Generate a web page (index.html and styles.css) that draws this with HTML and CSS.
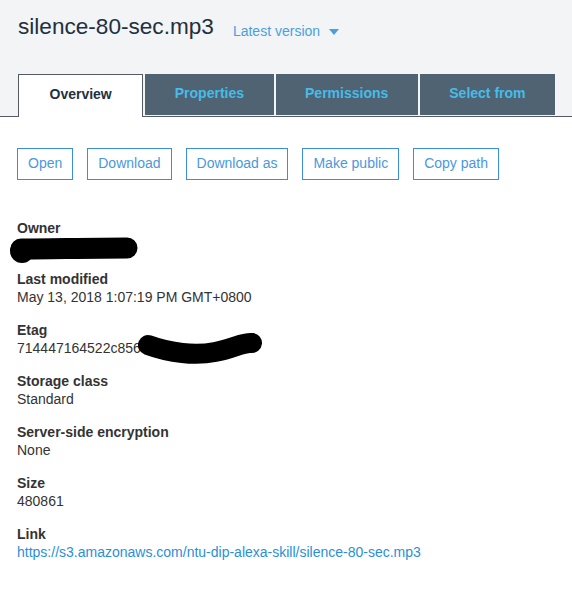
FILE: index.html
```html
<!DOCTYPE html>
<html lang="en">
<head>
<meta charset="utf-8">
<title>silence-80-sec.mp3</title>
<link rel="stylesheet" href="styles.css">
</head>
<body>
<header class="header">
  <div class="title-row">
    <h1 class="title">silence-80-sec.mp3</h1>
    <span class="version">Latest version <span class="caret"></span></span>
  </div>
  <nav class="tabs">
    <span class="tab active">Overview</span>
    <span class="tab">Properties</span>
    <span class="tab">Permissions</span>
    <span class="tab">Select from</span>
  </nav>
</header>
<main class="content">
  <div class="actions">
    <button class="btn">Open</button>
    <button class="btn">Download</button>
    <button class="btn">Download as</button>
    <button class="btn">Make public</button>
    <button class="btn">Copy path</button>
  </div>
  <dl class="fields">
    <div class="field">
      <dt>Owner</dt>
      <dd class="redacted">&nbsp;<svg class="blob blob-owner" width="135" height="30" viewBox="0 0 135 30"><circle cx="13" cy="15" r="12" fill="#000"/><path d="M12 13 C40 13 80 12 118 12" stroke="#000" stroke-width="21" stroke-linecap="round" fill="none"/></svg></dd>
    </div>
    <div class="field">
      <dt>Last modified</dt>
      <dd>May 13, 2018 1:07:19 PM GMT+0800</dd>
    </div>
    <div class="field">
      <dt>Etag</dt>
      <dd class="redacted">714447164522c856<svg class="blob blob-etag" width="150" height="35" viewBox="0 0 150 35"><path d="M11 14 C33 22 58 25 78 21 S106 11 115 12" stroke="#000" stroke-width="20" stroke-linecap="round" fill="none"/></svg></dd>
    </div>
    <div class="field">
      <dt>Storage class</dt>
      <dd>Standard</dd>
    </div>
    <div class="field">
      <dt>Server-side encryption</dt>
      <dd>None</dd>
    </div>
    <div class="field">
      <dt>Size</dt>
      <dd>480861</dd>
    </div>
    <div class="field">
      <dt>Link</dt>
      <dd><a class="link" href="#">https://s3.amazonaws.com/ntu-dip-alexa-skill/silence-80-sec.mp3</a></dd>
    </div>
  </dl>
</main>
</body>
</html>
```
FILE: styles.css
```css
* { box-sizing: border-box; }
html, body { margin: 0; padding: 0; background: #fff; }
body {
  font-family: "Liberation Sans", Arial, sans-serif;
  font-size: 14px;
  color: #333;
}
.header {
  background: #f2f4f5;
  border-bottom: 1px solid #545b64;
  padding: 14px 0 0 18px;
}
.title-row {
  display: flex;
  align-items: flex-end;
  gap: 19px;
}
.title {
  margin: 0;
  font-size: 22.6px;
  font-weight: normal;
  line-height: 25px;
  color: #232f3e;
}
.version {
  color: #4a9fe0;
  font-size: 14px;
  line-height: 16px;
  display: flex;
  align-items: center;
  gap: 9px;
}
.caret {
  width: 0;
  height: 0;
  border-left: 5px solid transparent;
  border-right: 5px solid transparent;
  border-top: 6px solid #4a9fe0;
  margin-top: 2px;
}
.tabs {
  display: flex;
  align-items: flex-start;
  gap: 2px;
  margin-top: 35px;
  margin-bottom: -1px;
}
.tab {
  height: 41px;
  margin-bottom: 2px;
  padding: 0 29.5px 4px;
  display: flex;
  align-items: center;
  justify-content: center;
  background: #4f6373;
  color: #46bce9;
  font-weight: bold;
  font-size: 14px;
}
.tab.active {
  height: 43px;
  margin-bottom: 0;
  padding: 0 30.5px 5px;
  background: #fff;
  color: #232f3e;
  border: 1px solid #545b64;
  border-bottom: none;
}
.content {
  padding: 31px 17px 0 17px;
}
.actions {
  display: flex;
  gap: 14px;
}
.btn {
  height: 32px;
  padding: 0 10px 2px;
  background: #fff;
  border: 1px solid #3a8fd8;
  color: #4a98de;
  font-family: inherit;
  font-size: 14px;
}
.fields {
  margin: 39px 0 0 0;
}
.field {
  margin-bottom: 15px;
}
.field dt {
  font-weight: bold;
  line-height: 18px;
  color: #333;
}
.field dd {
  margin: 0;
  line-height: 18px;
}
.redacted {
  position: relative;
}
.blob {
  position: absolute;
}
.blob-owner {
  left: -8px;
  top: -1px;
}
.blob-etag {
  left: 120px;
  top: -8px;
}
.link {
  color: #2a8fd8;
  text-decoration: none;
}
```
